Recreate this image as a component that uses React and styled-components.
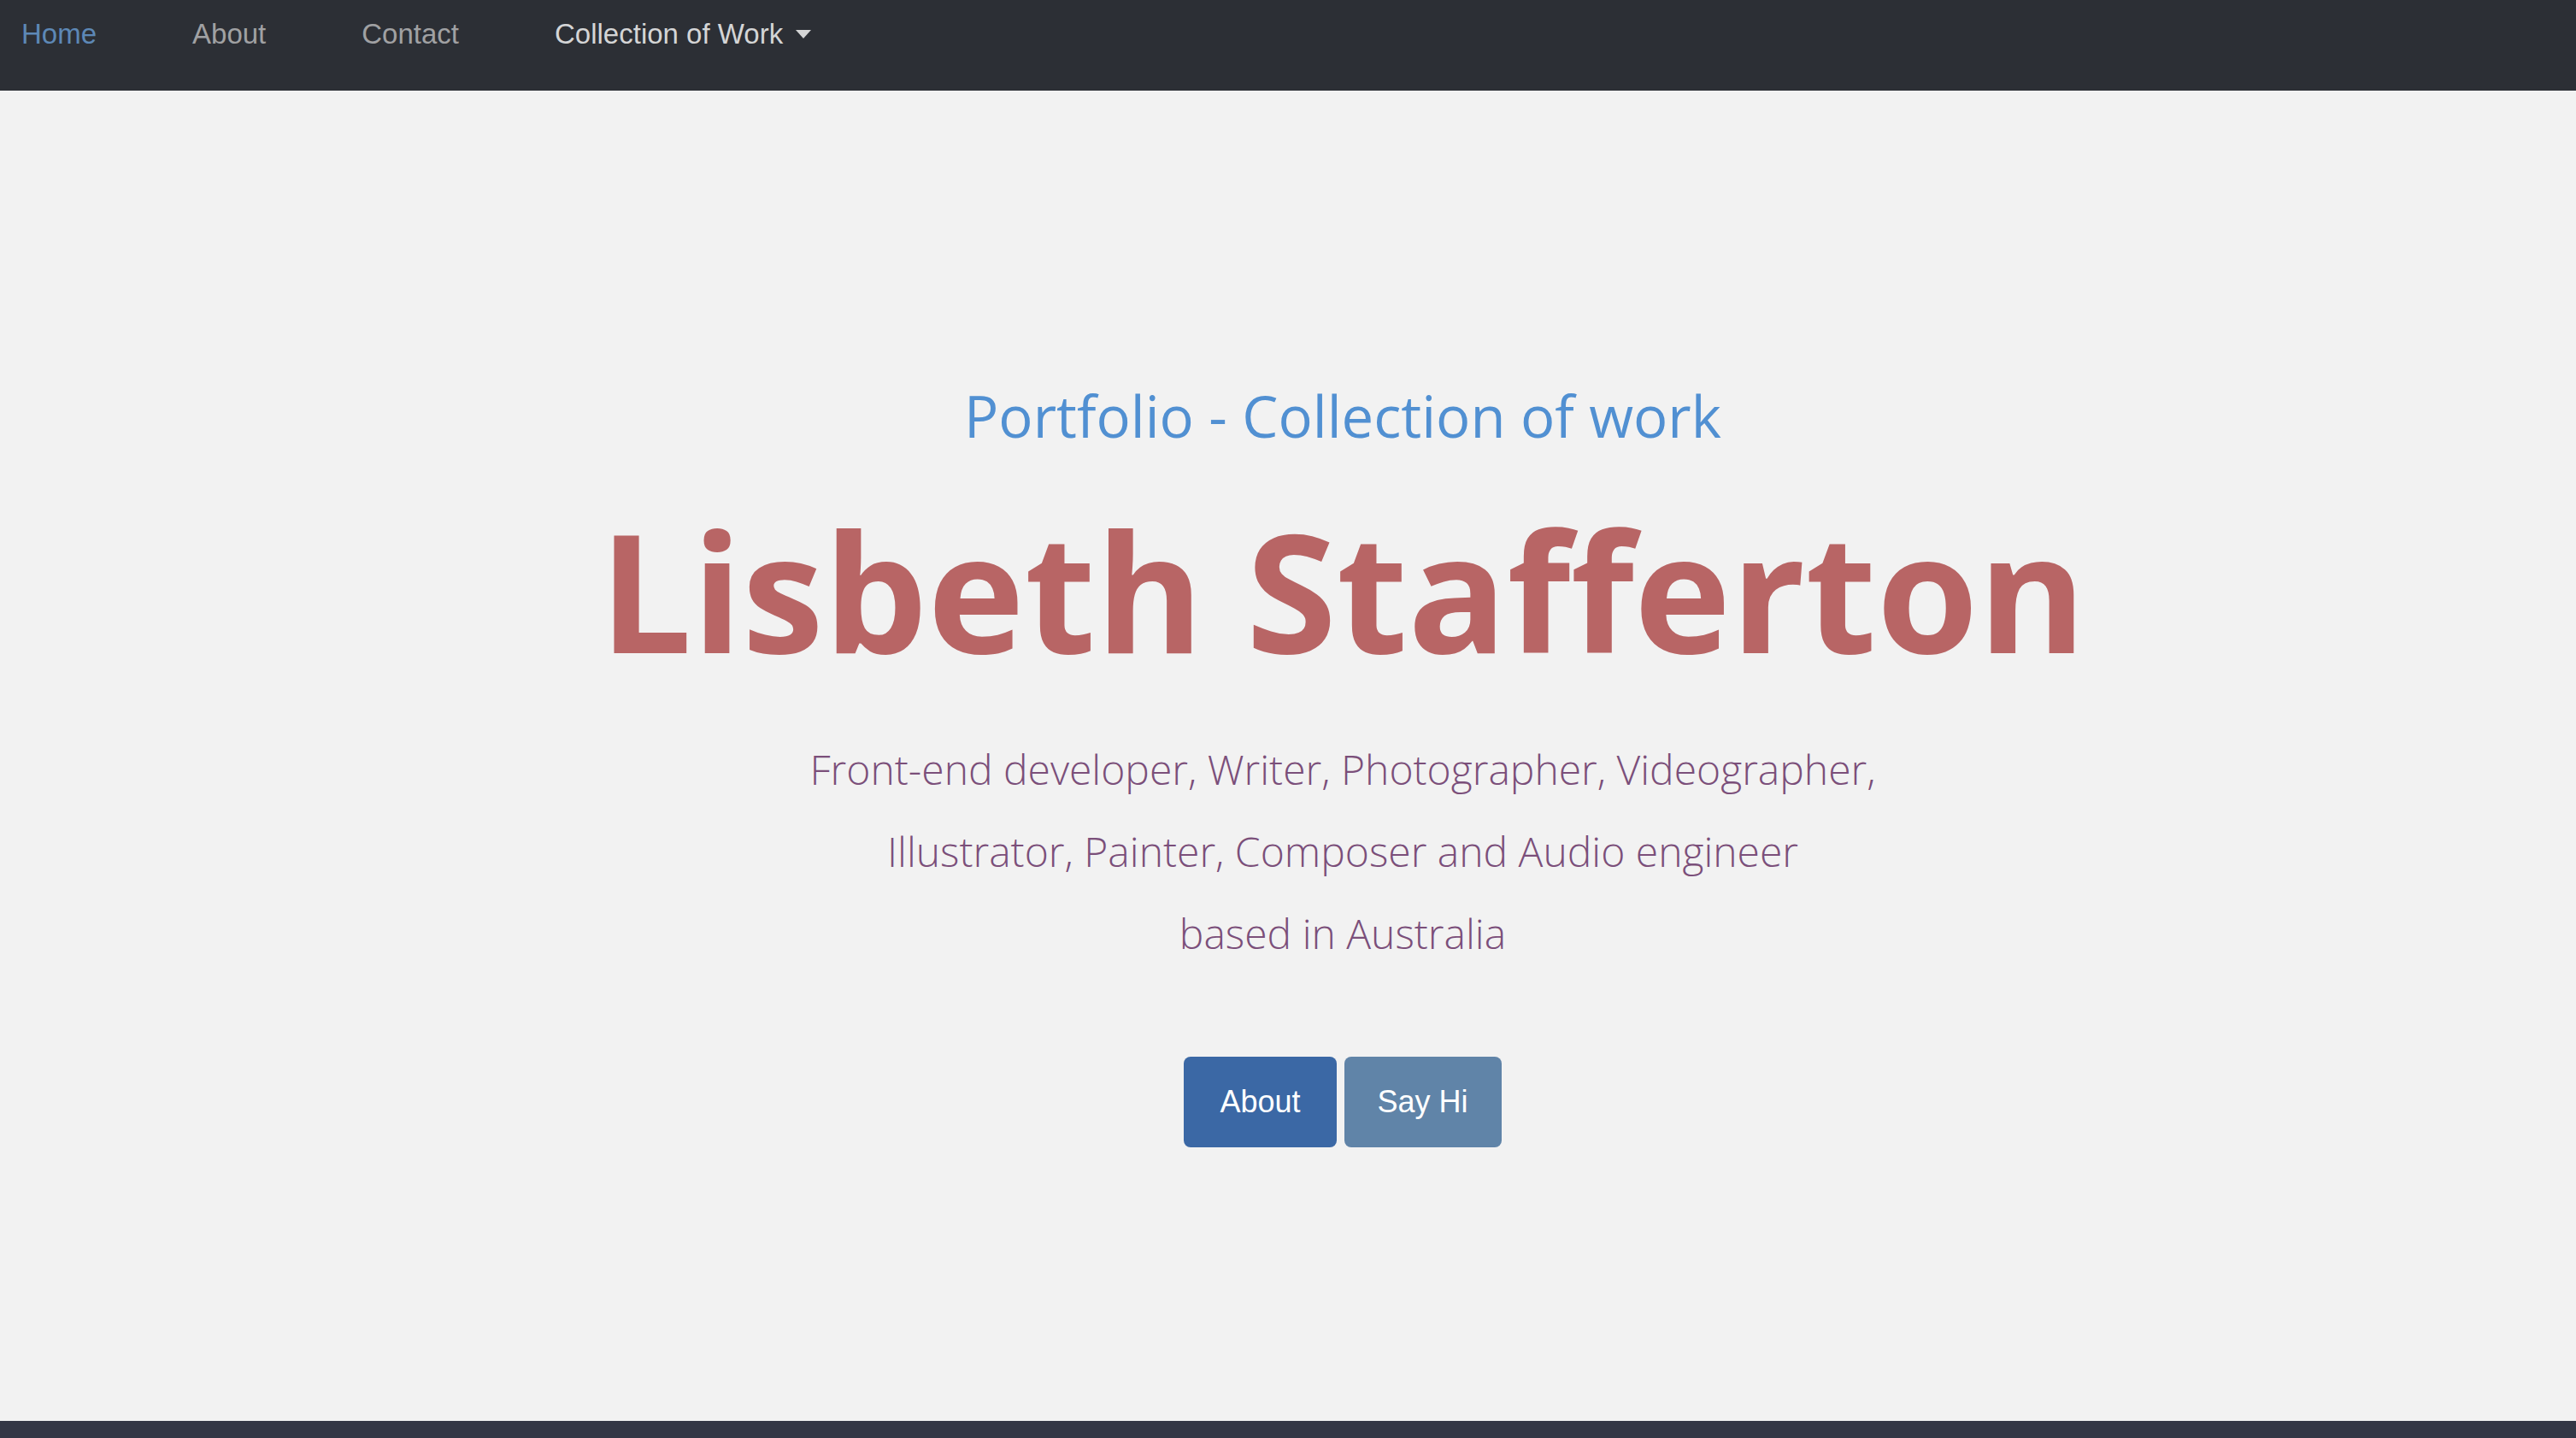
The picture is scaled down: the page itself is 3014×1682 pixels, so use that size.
import styled, { createGlobalStyle } from "styled-components";

const GlobalStyle = createGlobalStyle`
  html, body {
    margin: 0;
    padding: 0;
    background-color: #f2f2f2;
  }
  body {
    font-family: "Liberation Sans", Arial, sans-serif;
  }
`;

const Page = styled.div`
  display: flex;
  flex-direction: column;
  min-height: 1682px;
  background-color: #f2f2f2;
`;

const Navbar = styled.nav`
  display: flex;
  align-items: flex-start;
  height: 106px;
  padding: 16px 0 0 25px;
  box-sizing: border-box;
  background-color: #2c2f35;
  gap: 112px;
`;

const NavLink = styled.a`
  font-size: 33px;
  line-height: 48px;
  color: ${(props) =>
    props.active ? "#5d88b6" : props.light ? "#d4d5d6" : "#a0a1a3"};
  text-decoration: none;
  cursor: pointer;
  display: flex;
  align-items: center;
`;

const Caret = styled.span`
  display: inline-block;
  margin-left: 15px;
  width: 0;
  height: 0;
  border-top: 10px solid #d4d5d6;
  border-left: 9px solid transparent;
  border-right: 9px solid transparent;
`;

const Hero = styled.main`
  flex: 1;
  display: flex;
  flex-direction: column;
  align-items: center;
  padding: 330px 0 0 128px;
`;

const Tagline = styled.h2`
  margin: 0;
  font-family: "Open Sans", sans-serif;
  font-weight: 400;
  font-size: 67px;
  line-height: 100px;
  color: #5190d2;
`;

const Name = styled.h1`
  margin: 39px 0 0;
  font-family: "Open Sans", sans-serif;
  font-weight: 700;
  font-size: 192px;
  line-height: 230px;
  color: #b86565;
`;

const Roles = styled.p`
  margin: 47px 0 0;
  font-family: "Open Sans", sans-serif;
  font-weight: 300;
  font-size: 48px;
  line-height: 96px;
  text-align: center;
  color: #7b4f7a;
`;

const Buttons = styled.div`
  display: flex;
  gap: 9px;
  margin-top: 96px;
`;

const Button = styled.button`
  border: none;
  border-radius: 8px;
  height: 106px;
  padding: 0 ${(props) => (props.secondary ? "39px" : "42px")};
  font-family: "Liberation Sans", Arial, sans-serif;
  font-size: 36px;
  color: #ffffff;
  background-color: ${(props) => (props.secondary ? "#6084a8" : "#3b68a5")};
  cursor: pointer;
`;

const Footer = styled.footer`
  height: 20px;
  background-color: #333645;
`;

const App = () => {
  return (
    <>
      <GlobalStyle />
      <Page>
        <Navbar>
          <NavLink active>Home</NavLink>
          <NavLink>About</NavLink>
          <NavLink>Contact</NavLink>
          <NavLink light>
            Collection of Work
            <Caret />
          </NavLink>
        </Navbar>

        <Hero>
          <Tagline>Portfolio - Collection of work</Tagline>
          <Name>Lisbeth Stafferton</Name>
          <Roles>
            Front-end developer, Writer, Photographer, Videographer,
            <br />
            Illustrator, Painter, Composer and Audio engineer
            <br />
            based in Australia
          </Roles>
          <Buttons>
            <Button>About</Button>
            <Button secondary>Say Hi</Button>
          </Buttons>
        </Hero>

        <Footer />
      </Page>
    </>
  );
};

export default App;
